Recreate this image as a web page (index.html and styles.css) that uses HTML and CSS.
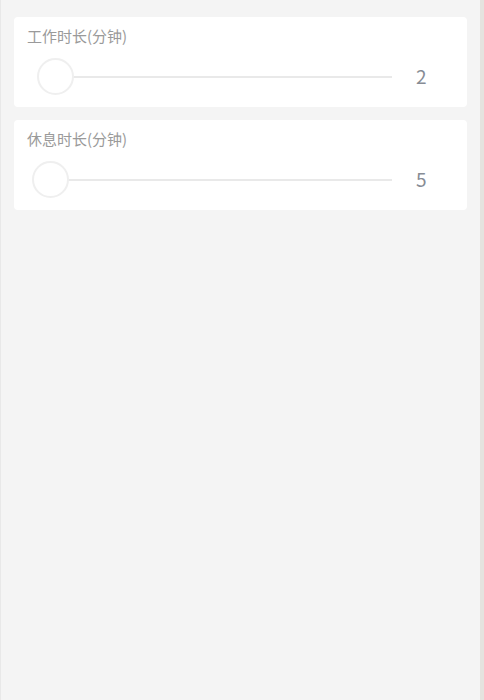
FILE: index.html
```html
<!DOCTYPE html>
<html lang="zh-CN">
<head>
  <meta charset="UTF-8" />
  <title>番茄钟设置</title>
  <link rel="stylesheet" href="styles.css">
</head>
<body>
  <div class="page">
    <!-- 工作时长 -->
    <div class="card">
      <div class="card-label">工作时长(分钟)</div>
      <div class="slider-row">
        <div class="slider">
          <div class="slider-track"></div>
          <div class="slider-thumb" style="left: 1.69%"></div>
        </div>
        <div class="slider-value">2</div>
      </div>
    </div>

    <!-- 休息时长 -->
    <div class="card">
      <div class="card-label">休息时长(分钟)</div>
      <div class="slider-row">
        <div class="slider">
          <div class="slider-track"></div>
          <div class="slider-thumb" style="left: 0%"></div>
        </div>
        <div class="slider-value">5</div>
      </div>
    </div>
  </div>
</body>
</html>
```

FILE: styles.css
```css
body {
  margin: 0;
  background: #e5e3df;
  font-family: "Noto Sans CJK SC", "Noto Sans", sans-serif;
}

.page {
  width: 479px;
  height: 100vh;
  background: #f4f4f4;
  border-left: 1px solid #e8e8e8;
  padding-top: 17px;
  box-sizing: content-box;
  overflow: hidden;
}

.card {
  background: #fff;
  margin: 0 13px 13px 13px;
  border-radius: 4px;
  height: 90px;
  padding: 8px 0 9px 13px;
  box-sizing: border-box;
}

.card-label {
  font-size: 15px;
  line-height: 21px;
  color: #9a9a9a;
}

.slider-row {
  display: flex;
  align-items: center;
  height: 42px;
  margin-top: 10px;
}

.slider {
  position: relative;
  width: 342px;
  height: 2px;
  margin-left: 23px;
}

.slider-track {
  height: 2px;
  background: #e9e9e9;
}

.slider-thumb {
  position: absolute;
  top: -18px;
  width: 37px;
  height: 37px;
  margin-left: -18.5px;
  border-radius: 50%;
  background: #fff;
  box-sizing: border-box;
  border: 2px solid #efefef;
}

.slider-value {
  margin-left: 24px;
  margin-bottom: 3px;
  font-size: 19px;
  color: #878c95;
}
```
